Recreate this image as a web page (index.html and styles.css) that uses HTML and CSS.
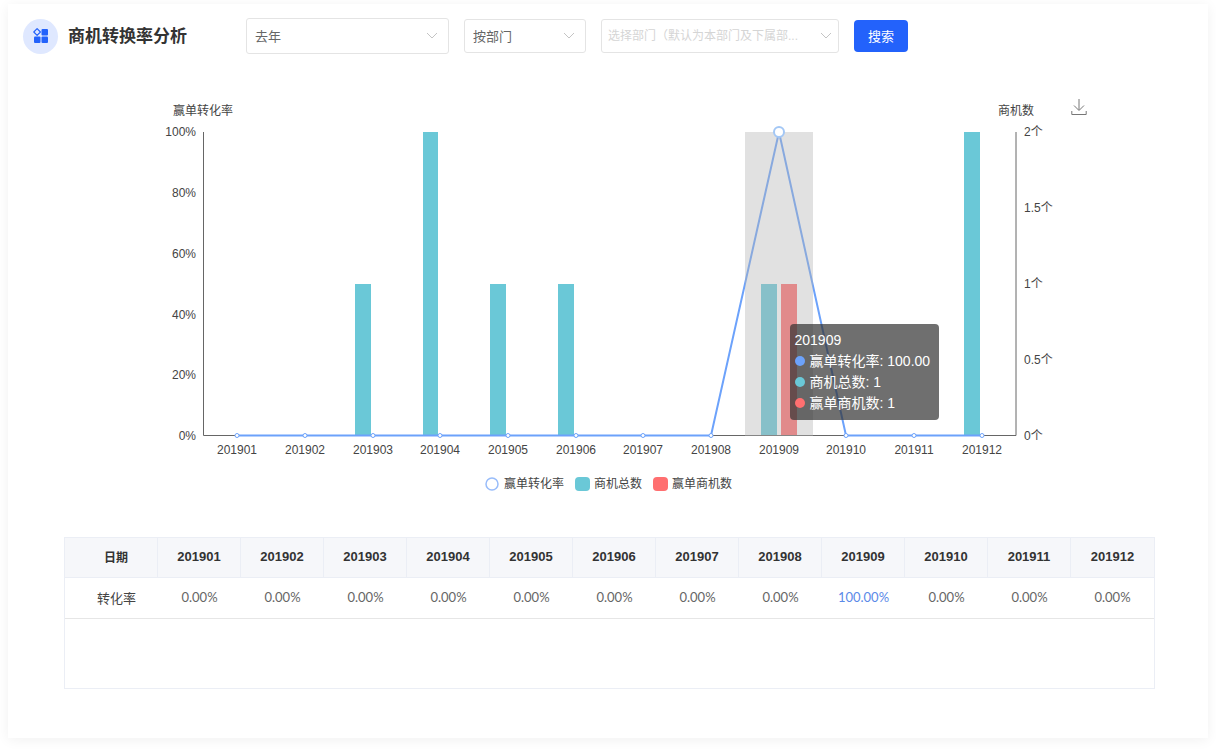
FILE: index.html
```html
<!DOCTYPE html>
<html lang="zh-CN">
<head>
<meta charset="utf-8">
<title>商机转换率分析</title>
<link rel="stylesheet" href="styles.css">
</head>
<body>
<main class="card">
  <header class="toolbar">
    <span class="badge">
      <svg width="16" height="16" viewBox="0 0 16 16" aria-hidden="true">
        <path d="M4.100 .700 7.400 4 4.100 7.300 .800 4z" fill="none" stroke="#2362fb" stroke-width="1.200" stroke-linejoin="round"/>
        <rect x="8.500" y="1" width="6.500" height="6.500" rx="1" fill="#2362fb"/>
        <rect x="1" y="8.500" width="6.500" height="6.500" rx="1" fill="#2362fb"/>
        <rect x="8.500" y="8.500" width="6.500" height="6.500" rx="1" fill="#2362fb"/>
      </svg>
    </span>
    <h1 class="title">商机转换率分析</h1>
    <form class="filters">
      <div class="field field-period">
        <select aria-label="时间"><option>去年</option></select>
        <svg class="chevron" viewBox="0 0 12 8" aria-hidden="true"><path d="M1 1l5 5 5-5"/></svg>
      </div>
      <div class="field field-scope">
        <select aria-label="范围"><option>按部门</option></select>
        <svg class="chevron" viewBox="0 0 12 8" aria-hidden="true"><path d="M1 1l5 5 5-5"/></svg>
      </div>
      <div class="field field-dept">
        <select aria-label="部门"><option>选择部门（默认为本部门及下属部...</option></select>
        <svg class="chevron" viewBox="0 0 12 8" aria-hidden="true"><path d="M1 1l5 5 5-5"/></svg>
      </div>
      <button class="search" type="button">搜索</button>
    </form>
  </header>

  <section class="chart">
    <svg class="plot" viewBox="0 0 1091 410" role="img" aria-label="商机转换率图表">
      <g class="bars">
        <rect x="291" y="194" width="16" height="152"/>
        <rect x="359" y="42" width="15" height="304"/>
        <rect x="426" y="194" width="16" height="152"/>
        <rect x="494" y="194" width="16" height="152"/>
        <rect x="697" y="194" width="16" height="152"/>
        <rect x="900" y="42" width="16" height="304"/>
        <rect class="won" x="717" y="194" width="16" height="152"/>
      </g>
      <path class="axis" d="M139.500 42V345.500H952V42"/>
      <path class="line" d="M173 345.500H647L715 42 782 345.500H918"/>
      <rect class="band" x="681" y="42" width="68" height="304"/>
      <g class="dots">
        <circle cx="173" cy="345.500" r="2"/><circle cx="241" cy="345.500" r="2"/>
        <circle cx="309" cy="345.500" r="2"/><circle cx="376" cy="345.500" r="2"/>
        <circle cx="444" cy="345.500" r="2"/><circle cx="512" cy="345.500" r="2"/>
        <circle cx="579" cy="345.500" r="2"/><circle cx="647" cy="345.500" r="2"/>
        <circle cx="782" cy="345.500" r="2"/><circle cx="850" cy="345.500" r="2"/>
        <circle cx="918" cy="345.500" r="2"/>
      </g>
      <circle class="active" cx="715" cy="42" r="5"/>
      <g class="label middle">
        <text x="139" y="25">赢单转化率</text>
        <text x="952" y="25">商机数</text>
      </g>
      <g class="label end">
        <text x="132" y="46">100%</text><text x="132" y="107">80%</text>
        <text x="132" y="168">60%</text><text x="132" y="229">40%</text>
        <text x="132" y="289">20%</text><text x="132" y="350">0%</text>
      </g>
      <g class="label">
        <text x="960" y="46">2个</text><text x="960" y="122">1.5个</text>
        <text x="960" y="198">1个</text><text x="960" y="274">0.5个</text>
        <text x="960" y="350">0个</text>
      </g>
      <g class="label middle">
        <text x="173" y="364">201901</text><text x="241" y="364">201902</text>
        <text x="309" y="364">201903</text><text x="376" y="364">201904</text>
        <text x="444" y="364">201905</text><text x="512" y="364">201906</text>
        <text x="579" y="364">201907</text><text x="647" y="364">201908</text>
        <text x="715" y="364">201909</text><text x="782" y="364">201910</text>
        <text x="850" y="364">201911</text><text x="918" y="364">201912</text>
      </g>
      <circle class="key" cx="428" cy="394" r="6"/>
      <rect class="key-total" x="511" y="387" width="15" height="14" rx="4"/>
      <rect class="key-won" x="589" y="387" width="15" height="14" rx="4"/>
      <g class="label">
        <text x="440" y="398">赢单转化率</text>
        <text x="530" y="398">商机总数</text>
        <text x="608" y="398">赢单商机数</text>
      </g>
    </svg>
    <button class="download" type="button" aria-label="下载">
      <svg width="18" height="18" viewBox="0 0 18 18" aria-hidden="true"><path d="M9 1v11M4 7.500l5 5 5-5M1.800 13v3.500h14.400V13"/></svg>
    </button>
    <div class="tooltip">
      <div>201909</div>
      <div><i class="dot dot-rate"></i>赢单转化率: 100.00</div>
      <div><i class="dot dot-total"></i>商机总数: 1</div>
      <div><i class="dot dot-won"></i>赢单商机数: 1</div>
    </div>
  </section>

  <div class="table-box">
    <table>
      <colgroup><col class="col-name"><col span="12"></colgroup>
      <thead>
        <tr><th>日期</th><th>201901</th><th>201902</th><th>201903</th><th>201904</th><th>201905</th><th>201906</th><th>201907</th><th>201908</th><th>201909</th><th>201910</th><th>201911</th><th>201912</th></tr>
      </thead>
      <tbody>
        <tr><td class="name">转化率</td><td>0.00%</td><td>0.00%</td><td>0.00%</td><td>0.00%</td><td>0.00%</td><td>0.00%</td><td>0.00%</td><td>0.00%</td><td><a href="#">100.00%</a></td><td>0.00%</td><td>0.00%</td><td>0.00%</td></tr>
      </tbody>
    </table>
  </div>
</main>
</body>
</html>
```
FILE: styles.css
```css
* { box-sizing: border-box; }
body {
  margin: 0;
  padding: 4px 8px 12px;
  background: #fff;
  color: #333;
  font-family: "Liberation Sans", "Noto Sans CJK SC", sans-serif;
  font-size: 13px;
}
.card {
  padding: 14px 53px 49px 56px;
  background: #fff;
  box-shadow: 0 2px 12px rgba(0, 0, 0, 0.06);
}

/* Title and filters */
.toolbar {
  display: flex;
  align-items: center;
  margin-left: -41px;
}
.badge {
  display: flex;
  align-items: center;
  justify-content: center;
  width: 35px;
  height: 35px;
  border-radius: 50%;
  background: #dfe8ff;
}
.title {
  margin: 0 59px 0 10px;
  padding-top: 2px;
  font-size: 17px;
  font-weight: 700;
  line-height: 24px;
  white-space: nowrap;
}
.filters {
  display: flex;
  align-items: center;
  gap: 15px;
}
.field { position: relative; }
.field select {
  width: 100%;
  height: 34px;
  padding: 0 28px 0 8px;
  border: 1px solid #e4e4e4;
  border-radius: 3px;
  appearance: none;
  background: #fff;
  color: #666;
  font: inherit;
  text-overflow: ellipsis;
}
.field-period { width: 203px; }
.field-period select { height: 36px; }
.field-scope { width: 122px; }
.field-dept { width: 238px; }
.field-dept select {
  padding-left: 6px;
  color: #d5d5d5;
  font-size: 12px;
}
.chevron {
  position: absolute;
  top: 50%;
  right: 11px;
  width: 12px;
  height: 8px;
  margin-top: -4px;
  fill: none;
  stroke: #c4c4c4;
  pointer-events: none;
}
.field-dept .chevron { right: 7px; }
.search {
  width: 54px;
  height: 32px;
  padding: 0 0 2px;
  border: 0;
  border-radius: 4px;
  background: #2362fb;
  color: #fff;
  font: inherit;
}

/* Chart */
.chart {
  position: relative;
  margin-top: 36px;
}
.plot {
  display: block;
  width: 100%;
}
.bars { fill: #6ac8d7; }
.bars .won { fill: #ff6f70; }
.band { fill: rgba(180, 180, 180, 0.4); }
.axis { fill: none; stroke: #666; }
.line { fill: none; stroke: #6ca2fb; stroke-width: 2; }
.dots { fill: #fff; stroke: #6ca2fb; }
.active { fill: #fff; stroke: #a3c7f5; stroke-width: 2; }
.label { fill: #444; font-size: 12px; }
.middle { text-anchor: middle; }
.end { text-anchor: end; }
.key { fill: #fff; stroke: #98bcfa; stroke-width: 1.500; }
.key-total { fill: #6ac8d7; }
.key-won { fill: #ff6f70; }
.download {
  position: absolute;
  top: 2%;
  left: 92.200%;
  width: 18px;
  height: 18px;
  padding: 0;
  border: 0;
  background: none;
}
.download svg {
  display: block;
  fill: none;
  stroke: #777;
}
.tooltip {
  position: absolute;
  top: 57%;
  left: 66.500%;
  padding: 6px 9px 6px 5px;
  border-radius: 4px;
  background: rgba(50, 50, 50, 0.7);
  color: #fff;
  font-size: 14px;
  line-height: 21px;
  white-space: nowrap;
}
.dot {
  display: inline-block;
  width: 10px;
  height: 10px;
  margin-right: 5px;
  border-radius: 50%;
}
.dot-rate { background: #6ca2fb; }
.dot-total { background: #6ac8d7; }
.dot-won { background: #ff6f70; }

/* Table */
.table-box {
  min-height: 152px;
  margin-top: 37px;
  border: 1px solid #ebeef5;
}
table {
  width: 100%;
  border-collapse: separate;
  border-spacing: 0;
  table-layout: fixed;
  font-family: Lato, "Noto Sans CJK SC", sans-serif;
  text-align: center;
}
.col-name { width: 93px; }
th, td {
  height: 40px;
  padding: 0 0 2px;
}
th {
  border-right: 1px solid #ebeef5;
  border-bottom: 1px solid #ebeef5;
  background: #f6f7fa;
  font-family: "Liberation Sans", "Noto Sans CJK SC", sans-serif;
  font-weight: 700;
}
th:last-child { border-right: 0; }
th:first-child {
  padding-left: 10px;
  font-size: 12px;
}
td {
  height: 41px;
  border-bottom: 1px solid #e6e6e6;
  color: #666;
}
.name {
  padding-left: 10px;
  color: #444;
}
td a {
  color: #5b8ae8;
  text-decoration: none;
}
```
